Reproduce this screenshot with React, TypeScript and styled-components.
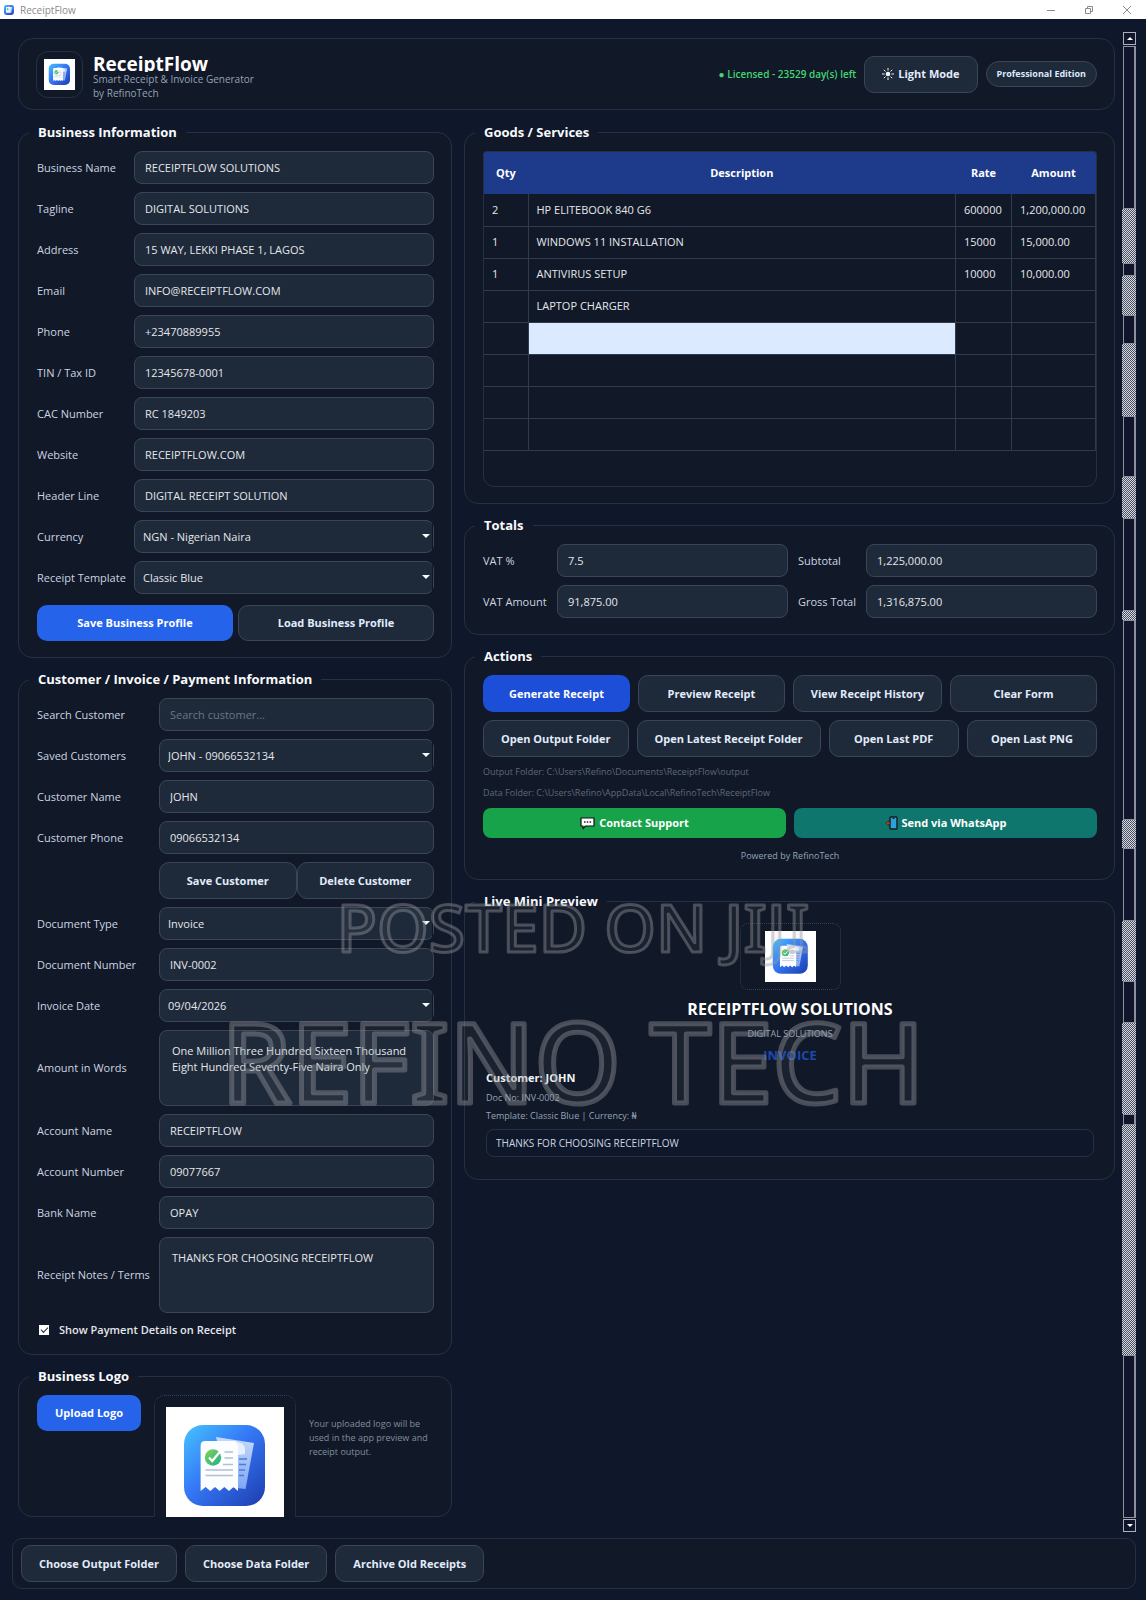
import React, { useId } from "react";
import styled, { createGlobalStyle, css } from "styled-components";

const color = {
  page: "#0f172a",
  card: "#111827",
  line: "#253142",
  field: "#1e2939",
  fieldLine: "#3a4657",
  text: "#e5e7eb",
  label: "#cbd5e1",
  muted: "#94a3b8",
  faint: "#5d697b",
  blue: "#2563eb",
};

const GlobalStyle = createGlobalStyle`
  *, *::before, *::after { box-sizing: border-box; }
  body { margin: 0; background: ${color.page}; }
  body, input, textarea, select, button {
    font-family: "Open Sans", "Noto Sans", "Liberation Sans", sans-serif;
    font-size: 11px;
    line-height: 16px;
  }
`;

/* ---------- window ---------- */

const Window = styled.div`
  position: relative;
  min-height: 100vh;
  display: flex;
  flex-direction: column;
  overflow: hidden;
  background: ${color.page};
  color: ${color.text};
`;

const TitleBar = styled.div`
  height: 19px;
  flex: none;
  display: flex;
  align-items: center;
  gap: 6px;
  padding: 0 14px 0 4px;
  background: #fff;
  color: #8b8b8b;
  font-size: 10px;
`;

const WindowButtons = styled.div`
  margin-left: auto;
  display: flex;
  gap: 28px;
`;

const WindowButton = styled.button`
  display: flex;
  padding: 0;
  border: 0;
  background: none;
  color: #8b8b8b;
`;

const Main = styled.main`
  flex: 1;
  display: grid;
  grid-template-columns: minmax(0, 1fr) 14px;
  gap: 7px;
  padding: 13px 10px 0 12px;
`;

const Content = styled.div`
  padding: 6px 0 0 6px;
`;

const Columns = styled.div`
  display: grid;
  grid-template-columns: minmax(0, 2fr) minmax(0, 3fr);
  align-items: start;
  gap: 12px;
  margin-top: 13px;
`;

const Column = styled.div`
  display: flex;
  flex-direction: column;
  gap: 12px;
`;

/* ---------- header ---------- */

const Header = styled.header`
  height: 72px;
  display: flex;
  align-items: center;
  gap: 8px;
  padding: 0 17px;
  border: 1px solid ${color.line};
  border-radius: 15px;
  background: ${color.card};
`;

const LogoTile = styled.div`
  width: 47px;
  height: 47px;
  display: grid;
  place-items: center;
  border: 1px solid ${color.line};
  border-radius: 12px;
`;

const Brand = styled.div`
  flex: 1;
  padding: 6px 0 0 2px;
  color: ${color.muted};
  font-size: 10px;
  line-height: 14px;
`;

const BrandName = styled.h1`
  height: 18px;
  margin: 0;
  overflow: hidden;
  color: #fff;
  font-size: 19px;
  font-weight: 700;
  line-height: 20px;
`;

const BrandLine = styled.div``;

const License = styled.span`
  color: #41d673;
  font-size: 10px;
  font-weight: 600;
`;

const EditionPill = styled.span`
  padding: 4px 10px;
  border: 1px solid ${color.fieldLine};
  border-radius: 13px;
  background: ${color.field};
  color: #dbeafe;
  font-size: 9px;
  font-weight: 700;
`;

/* ---------- groups and fields ---------- */

const Group = styled.fieldset<{ $flush?: boolean }>`
  min-width: 0;
  margin: 0;
  padding: 10px 17px ${(p) => (p.$flush ? 0 : 16)}px 18px;
  border: 1px solid ${color.line};
  border-radius: 14px;
  background: ${color.card};
`;

const GroupTitle = styled.legend`
  margin-left: -8px;
  padding: 0 9px;
  color: #f8fafc;
  font-size: 13px;
  font-weight: 700;
  line-height: 18px;
`;

const Stack = styled.div`
  display: flex;
  flex-direction: column;
  gap: 8px;
`;

const Row = styled.div<{ $label: number }>`
  display: grid;
  grid-template-columns: ${(p) => p.$label}px minmax(0, 1fr);
  align-items: center;
`;

const Label = styled.label`
  color: ${color.label};
`;

const box = css`
  width: 100%;
  border: 1px solid ${color.fieldLine};
  border-radius: 8px;
  background: ${color.field};
  color: ${color.text};
  outline: none;
`;

const Input = styled.input`
  ${box}
  height: 33px;
  padding: 0 10px;
  &::placeholder {
    color: #6b7687;
    opacity: 1;
  }
`;

const TextArea = styled.textarea`
  ${box}
  display: block;
  height: 76px;
  padding: 12px;
  resize: none;
`;

const SelectBox = styled.div`
  position: relative;
  &::before {
    content: "";
    position: absolute;
    top: 4px;
    right: 1px;
    bottom: 2px;
    width: 1px;
    background: ${color.page};
  }
  &::after {
    content: "";
    position: absolute;
    top: 14px;
    right: 4px;
    border: 4px solid transparent;
    border-top-color: #f8fafc;
    border-bottom: 0;
    pointer-events: none;
  }
`;

const Select = styled.select`
  ${box}
  display: block;
  height: 33px;
  padding: 0 20px 0 8px;
  appearance: none;
`;

const CheckRow = styled.label`
  height: 17px;
  display: flex;
  align-items: center;
  gap: 10px;
  padding-left: 2px;
  font-weight: 600;
`;

const CheckBox = styled.input`
  width: 10px;
  height: 10px;
  margin: 0;
  display: grid;
  place-items: center;
  appearance: none;
  background: #fff;
  &:checked::after {
    content: "";
    width: 7px;
    height: 4px;
    margin-bottom: 2px;
    border: solid #1f2937;
    border-width: 0 0 1px 1px;
    transform: rotate(-45deg);
  }
`;

/* ---------- buttons ---------- */

const tones = {
  plain: css`
    border-color: ${color.fieldLine};
    background: ${color.field};
    color: #e2ecfb;
  `,
  primary: css`
    background: ${color.blue};
  `,
  deep: css`
    background: #1d4ed8;
  `,
  green: css`
    background: #16a34a;
  `,
  teal: css`
    background: #0f766e;
  `,
};

const Button = styled.button<{ $tone?: keyof typeof tones; $height?: number }>`
  height: ${(p) => p.$height ?? 37}px;
  display: inline-flex;
  align-items: center;
  justify-content: center;
  gap: 4px;
  padding: 0 17px;
  border: 1px solid transparent;
  border-radius: ${(p) => ((p.$height ?? 37) < 35 ? 8 : 10)}px;
  color: #fff;
  font-weight: 700;
  white-space: nowrap;
  ${(p) => tones[p.$tone ?? "plain"]}
`;

const ButtonRow = styled.div<{ $gap?: number; $top?: number }>`
  display: flex;
  gap: ${(p) => p.$gap ?? 8}px;
  margin-top: ${(p) => p.$top ?? 0}px;
  & > ${Button} {
    flex: 1 1 0;
  }
`;

/* ---------- goods table ---------- */

const TableFrame = styled.div`
  height: 336px;
  overflow: hidden;
  border: 1px solid ${color.line};
  border-radius: 3px 3px 11px 11px;
`;

const Table = styled.table`
  width: 100%;
  table-layout: fixed;
  border-collapse: collapse;
`;

const Col = styled.col<{ $width?: number }>`
  width: ${(p) => (p.$width ? `${p.$width}px` : "auto")};
`;

const HeadCell = styled.th`
  height: 42px;
  padding: 0;
  background: #1e3a8a;
  color: #fff;
  font-weight: 700;
`;

const Cell = styled.td<{ $selected?: boolean }>`
  height: 32px;
  padding: 0 8px;
  border-right: 1px solid #303b4b;
  border-bottom: 1px solid #303b4b;
  background: ${(p) => (p.$selected ? "#dbeafe" : "transparent")};
`;

/* ---------- totals, actions, preview ---------- */

const TotalsGrid = styled.div`
  display: grid;
  grid-template-columns: 64px minmax(0, 1fr) 58px minmax(0, 1fr);
  align-items: center;
  gap: 8px 10px;
  white-space: nowrap;
`;

const Paths = styled.div`
  display: flex;
  flex-direction: column;
  gap: 7px;
  color: ${color.faint};
  font-size: 9px;
  line-height: 14px;
`;

const PathLine = styled.div``;

const Powered = styled.div`
  padding-top: 3px;
  color: ${color.muted};
  font-size: 9px;
  line-height: 14px;
  text-align: center;
`;

const Preview = styled.div`
  display: flex;
  flex-direction: column;
  gap: 6px;
  padding: 3px 3px 6px;
`;

const PreviewLogo = styled.div`
  width: 101px;
  height: 67px;
  display: grid;
  place-items: center;
  align-self: center;
  border: 1px dotted #334155;
  border-radius: 8px;
`;

const PreviewName = styled.h2`
  margin: 0;
  color: #fff;
  font-size: 16px;
  font-weight: 700;
  line-height: 26px;
  text-align: center;
`;

const PreviewLine = styled.div<{ $center?: boolean }>`
  color: ${color.muted};
  font-size: 9px;
  line-height: 12px;
  text-align: ${(p) => (p.$center ? "center" : "left")};
`;

const PreviewKind = styled.div`
  color: #1c48ae;
  font-size: 13px;
  font-weight: 700;
  line-height: 18px;
  text-align: center;
`;

const PreviewCustomer = styled.div`
  color: #f1f5f9;
  font-weight: 700;
`;

const PreviewNote = styled.div`
  height: 28px;
  margin-top: 1px;
  padding: 5px 9px;
  border: 1px solid ${color.line};
  border-radius: 8px;
  background: ${color.page};
  color: ${color.label};
  font-size: 10px;
`;

/* ---------- logo group ---------- */

const LogoRow = styled.div`
  height: 122px;
  display: flex;
  align-items: flex-start;
  gap: 13px;
  margin-bottom: -1px;
  overflow: hidden;
`;

const UploadedLogo = styled.div`
  flex: none;
  padding: 11px;
  border: 1px dotted #334155;
  border-radius: 10px;
  background: ${color.card};
`;

const LogoHint = styled.p`
  margin: 22px 0 0;
  color: #828e9f;
  font-size: 9px;
  line-height: 14px;
`;

/* ---------- footer and scroll bar ---------- */

const Footer = styled.footer`
  flex: none;
  display: flex;
  gap: 8px;
  margin: 6px 10px 11px 12px;
  padding: 6px 8px;
  border: 1px solid ${color.line};
  border-radius: 10px;
  background: ${color.card};
`;

const ScrollBar = styled.div`
  display: flex;
  flex-direction: column;
`;

const ScrollArrow = styled.button<{ $down?: boolean }>`
  height: 13px;
  flex: none;
  display: grid;
  place-items: center;
  margin: ${(p) => (p.$down ? "1px 0 0 1px" : "0 0 1px 1px")};
  padding: 0;
  border: 1px solid #aab0bc;
  background: #10152c;
  &::after {
    content: "";
    border: 3px solid transparent;
    ${(p) =>
      p.$down
        ? "border-top-color: #fff; border-bottom: 0;"
        : "border-bottom-color: #fff; border-top: 0;"}
  }
`;

const ScrollPart = styled.div<{ $size: number; $dots: boolean }>`
  flex: ${(p) => p.$size} 1 0;
  ${(p) =>
    p.$dots
      ? css`
          background: repeating-conic-gradient(#d5d8df 0 25%, #4b5062 0 50%) 0 0 / 2px 2px;
        `
      : css`
          margin-left: 1px;
          border: solid #8b909c;
          border-width: 1px 2px 1px 1px;
          background: #10152c;
        `}
`;

/* ---------- watermark ---------- */

const Watermark = styled.svg`
  position: absolute;
  top: 880px;
  left: 0;
  width: 100%;
  height: 250px;
  pointer-events: none;
  font-family: "Noto Sans", "Open Sans", sans-serif;
  font-weight: 500;
  text-anchor: middle;
  fill: rgba(150, 152, 158, 0.08);
  stroke: rgba(150, 152, 160, 0.42);
  stroke-linejoin: round;
`;

/* ---------- drawings ---------- */

function AppLogo({ size, bare = false }: { size: number; bare?: boolean }) {
  const id = useId();
  return (
    <svg
      width={size}
      height={size}
      viewBox={bare ? "18 18 82 82" : "0 0 118 118"}
      role="img"
      aria-label="ReceiptFlow logo"
      display="block"
    >
      <defs>
        <linearGradient id={`${id}a`} x1="0" y1="0" x2="1" y2="1">
          <stop offset="0" stopColor="#46c3ff" />
          <stop offset="0.45" stopColor="#3578f6" />
          <stop offset="1" stopColor="#1d3cae" />
        </linearGradient>
        <linearGradient id={`${id}b`} x1="0" y1="0" x2="1" y2="1">
          <stop offset="0" stopColor="#8ccf55" />
          <stop offset="1" stopColor="#19b38c" />
        </linearGradient>
        <linearGradient id={`${id}c`} x1="0" y1="0" x2="0" y2="1">
          <stop offset="0" stopColor="#c4dafc" />
          <stop offset="1" stopColor="#7ea6f2" />
        </linearGradient>
      </defs>
      {!bare && <rect width="118" height="118" fill="#fff" />}
      <rect x="18" y="18" width="81" height="81" rx="19" fill={`url(#${id}a)`} />
      <path d="M50 30 88 36 79.500 82 62 80Z" fill={`url(#${id}c)`} />
      <path d="M69 35q10 0 10 8v4l-7 1z" fill="#e7f0fe" />
      <path d="M73 52h8M73 57.500h7M73 63h6M73 68.500h5" stroke="#4d79d8" strokeWidth="1.500" />
      <path
        d="M39 34h30q3 1 3 7v43l-4.500-4-4.500 4-4.700-4-4.600 4-4.700-4-4.700 4-4.700-4-5 4V39q0-5 4.400-5z"
        fill="#fbfdff"
      />
      <circle cx="47" cy="50.500" r="8.200" fill={`url(#${id}b)`} />
      <path d="m43 50.500 3.200 3.500 7.500-9" fill="none" stroke="#fff" strokeWidth="2.200" />
      <path d="M58.500 45H67M58.500 51H67M57 57.500h10M39.500 63H67M39.500 68.500H67" stroke="#b4bfd4" strokeWidth="1.700" />
    </svg>
  );
}

function SunIcon() {
  return (
    <svg width="12" height="12" viewBox="0 0 12 12" aria-hidden="true">
      <circle cx="6" cy="6" r="2.300" fill="#f1f5f9" />
      <path
        d="M6 0v2.600M6 9.400V12M0 6h2.600M9.400 6H12M1.800 1.800l1.700 1.700M8.500 8.500l1.700 1.700M10.200 1.800 8.500 3.500M3.500 8.500l-1.700 1.700"
        stroke="#f1f5f9"
        strokeWidth="1"
      />
    </svg>
  );
}

function ChatIcon() {
  return (
    <svg width="15" height="14" viewBox="0 0 15 14" aria-hidden="true">
      <path d="M1 2h13v8H5.500L3 12.500V10H1z" fill="#fff" stroke="#111" strokeWidth="1.200" strokeLinejoin="round" />
      <path d="M4 6h1.500M6.800 6h1.500M9.600 6h1.500" stroke="#222" strokeWidth="1.500" />
    </svg>
  );
}

function PhoneIcon() {
  return (
    <svg width="13" height="14" viewBox="0 0 13 14" aria-hidden="true">
      <rect x="5" y="1" width="7" height="12" rx="0.800" fill="#2aa3dc" stroke="#1b1b1b" strokeWidth="1.400" />
      <path d="M7.500 2.600h2" stroke="#1b1b1b" />
      <path d="M0.800 7.200 3.600 4.600v1.600h2v2h-2v1.600z" fill="#a8432a" stroke="#1b1b1b" strokeWidth="0.500" />
    </svg>
  );
}

/* ---------- data ---------- */

type FieldSpec = {
  label: string;
  value?: string;
  placeholder?: string;
  kind?: "input" | "select" | "area";
};

const businessFields: FieldSpec[] = [
  { label: "Business Name", value: "RECEIPTFLOW SOLUTIONS" },
  { label: "Tagline", value: "DIGITAL SOLUTIONS" },
  { label: "Address", value: "15 WAY, LEKKI PHASE 1, LAGOS" },
  { label: "Email", value: "INFO@RECEIPTFLOW.COM" },
  { label: "Phone", value: "+23470889955" },
  { label: "TIN / Tax ID", value: "12345678-0001" },
  { label: "CAC Number", value: "RC 1849203" },
  { label: "Website", value: "RECEIPTFLOW.COM" },
  { label: "Header Line", value: "DIGITAL RECEIPT SOLUTION" },
  { label: "Currency", value: "NGN - Nigerian Naira", kind: "select" },
  { label: "Receipt Template", value: "Classic Blue", kind: "select" },
];

const customerFields: FieldSpec[] = [
  { label: "Search Customer", placeholder: "Search customer..." },
  { label: "Saved Customers", value: "JOHN - 09066532134", kind: "select" },
  { label: "Customer Name", value: "JOHN" },
  { label: "Customer Phone", value: "09066532134" },
];

const invoiceFields: FieldSpec[] = [
  { label: "Document Type", value: "Invoice", kind: "select" },
  { label: "Document Number", value: "INV-0002" },
  { label: "Invoice Date", value: "09/04/2026", kind: "select" },
  {
    label: "Amount in Words",
    value: "One Million Three Hundred Sixteen Thousand\nEight Hundred Seventy-Five Naira Only",
    kind: "area",
  },
  { label: "Account Name", value: "RECEIPTFLOW" },
  { label: "Account Number", value: "09077667" },
  { label: "Bank Name", value: "OPAY" },
  { label: "Receipt Notes / Terms", value: "THANKS FOR CHOOSING RECEIPTFLOW", kind: "area" },
];

const goods = [
  ["2", "HP ELITEBOOK 840 G6", "600000", "1,200,000.00"],
  ["1", "WINDOWS 11 INSTALLATION", "15000", "15,000.00"],
  ["1", "ANTIVIRUS SETUP", "10000", "10,000.00"],
  ["", "LAPTOP CHARGER", "", ""],
  ["", "", "", ""],
  ["", "", "", ""],
  ["", "", "", ""],
  ["", "", "", ""],
];

const totals: [string, string][] = [
  ["VAT %", "7.5"],
  ["Subtotal", "1,225,000.00"],
  ["VAT Amount", "91,875.00"],
  ["Gross Total", "1,316,875.00"],
];

/* Lengths of the scroll track, plain and dotted in turn. */
const track = [163, 55, 11, 39, 28, 73, 60, 41, 92, 9, 201, 28, 72, 61, 41, 92, 9, 233, 163];

/* ---------- parts ---------- */

function Control({ id, spec }: { id: string; spec: FieldSpec }) {
  if (spec.kind === "select") {
    return (
      <SelectBox>
        <Select id={id} defaultValue={spec.value}>
          <option>{spec.value}</option>
        </Select>
      </SelectBox>
    );
  }
  if (spec.kind === "area") {
    return <TextArea id={id} defaultValue={spec.value} />;
  }
  return <Input id={id} defaultValue={spec.value} placeholder={spec.placeholder} />;
}

function Fields({ specs, label }: { specs: FieldSpec[]; label: number }) {
  const base = useId();
  return (
    <>
      {specs.map((spec, i) => (
        <Row key={spec.label} $label={label}>
          <Label htmlFor={`${base}${i}`}>{spec.label}</Label>
          <Control id={`${base}${i}`} spec={spec} />
        </Row>
      ))}
    </>
  );
}

export default function App() {
  return (
    <>
      <GlobalStyle />
      <Window>
        <TitleBar>
          <AppLogo size={10} bare />
          ReceiptFlow
          <WindowButtons>
            <WindowButton aria-label="Minimize">
              <svg width="10" height="10" viewBox="0 0 10 10" stroke="currentColor" fill="none">
                <path d="M1 5.500h8" />
              </svg>
            </WindowButton>
            <WindowButton aria-label="Restore">
              <svg width="10" height="10" viewBox="0 0 10 10" stroke="currentColor" fill="none">
                <path d="M1.500 3.500h5v5h-5zM3.500 3.500v-2h5v5h-2" />
              </svg>
            </WindowButton>
            <WindowButton aria-label="Close">
              <svg width="10" height="10" viewBox="0 0 10 10" stroke="currentColor" fill="none">
                <path d="m1 1 8 8M9 1 1 9" />
              </svg>
            </WindowButton>
          </WindowButtons>
        </TitleBar>

        <Main>
          <Content>
            <Header>
              <LogoTile>
                <AppLogo size={31} />
              </LogoTile>
              <Brand>
                <BrandName>ReceiptFlow</BrandName>
                <BrandLine>Smart Receipt &amp; Invoice Generator</BrandLine>
                <BrandLine>by RefinoTech</BrandLine>
              </Brand>
              <License>● Licensed - 23529 day(s) left</License>
              <Button>
                <SunIcon />
                Light Mode
              </Button>
              <EditionPill>Professional Edition</EditionPill>
            </Header>

            <Columns>
              <Column>
                <Group>
                  <GroupTitle>Business Information</GroupTitle>
                  <Stack>
                    <Fields specs={businessFields} label={97} />
                    <ButtonRow $gap={5} $top={3}>
                      <Button $tone="primary" $height={36}>Save Business Profile</Button>
                      <Button $height={36}>Load Business Profile</Button>
                    </ButtonRow>
                  </Stack>
                </Group>

                <Group>
                  <GroupTitle>Customer / Invoice / Payment Information</GroupTitle>
                  <Stack>
                    <Fields specs={customerFields} label={122} />
                    <Row $label={122}>
                      <span />
                      <ButtonRow $gap={0}>
                        <Button>Save Customer</Button>
                        <Button>Delete Customer</Button>
                      </ButtonRow>
                    </Row>
                    <Fields specs={invoiceFields} label={122} />
                    <CheckRow>
                      <CheckBox type="checkbox" defaultChecked />
                      Show Payment Details on Receipt
                    </CheckRow>
                  </Stack>
                </Group>

                <Group $flush>
                  <GroupTitle>Business Logo</GroupTitle>
                  <LogoRow>
                    <Button $tone="primary" $height={36}>Upload Logo</Button>
                    <UploadedLogo>
                      <AppLogo size={118} />
                    </UploadedLogo>
                    <LogoHint>Your uploaded logo will be used in the app preview and receipt output.</LogoHint>
                  </LogoRow>
                </Group>
              </Column>

              <Column>
                <Group>
                  <GroupTitle>Goods / Services</GroupTitle>
                  <TableFrame>
                    <Table>
                      <colgroup>
                        <Col $width={44} />
                        <Col />
                        <Col $width={56} />
                        <Col $width={84} />
                      </colgroup>
                      <thead>
                        <tr>
                          <HeadCell>Qty</HeadCell>
                          <HeadCell>Description</HeadCell>
                          <HeadCell>Rate</HeadCell>
                          <HeadCell>Amount</HeadCell>
                        </tr>
                      </thead>
                      <tbody>
                        {goods.map((row, r) => (
                          <tr key={r}>
                            {row.map((value, c) => (
                              <Cell key={c} $selected={r === 4 && c === 1}>
                                {value}
                              </Cell>
                            ))}
                          </tr>
                        ))}
                      </tbody>
                    </Table>
                  </TableFrame>
                </Group>

                <Group>
                  <GroupTitle>Totals</GroupTitle>
                  <TotalsGrid>
                    {totals.map(([name, value], i) => (
                      <React.Fragment key={name}>
                        <Label htmlFor={`total-${i}`}>{name}</Label>
                        <Input id={`total-${i}`} defaultValue={value} />
                      </React.Fragment>
                    ))}
                  </TotalsGrid>
                </Group>

                <Group>
                  <GroupTitle>Actions</GroupTitle>
                  <Stack>
                    <ButtonRow>
                      <Button $tone="deep">Generate Receipt</Button>
                      <Button>Preview Receipt</Button>
                      <Button>View Receipt History</Button>
                      <Button>Clear Form</Button>
                    </ButtonRow>
                    <ButtonRow>
                      <Button>Open Output Folder</Button>
                      <Button>Open Latest Receipt Folder</Button>
                      <Button>Open Last PDF</Button>
                      <Button>Open Last PNG</Button>
                    </ButtonRow>
                    <Paths>
                      <PathLine>{"Output Folder: C:\\Users\\Refino\\Documents\\ReceiptFlow\\output"}</PathLine>
                      <PathLine>{"Data Folder: C:\\Users\\Refino\\AppData\\Local\\RefinoTech\\ReceiptFlow"}</PathLine>
                    </Paths>
                    <ButtonRow>
                      <Button $tone="green" $height={30}>
                        <ChatIcon />
                        Contact Support
                      </Button>
                      <Button $tone="teal" $height={30}>
                        <PhoneIcon />
                        Send via WhatsApp
                      </Button>
                    </ButtonRow>
                    <Powered>Powered by RefinoTech</Powered>
                  </Stack>
                </Group>

                <Group>
                  <GroupTitle>Live Mini Preview</GroupTitle>
                  <Preview>
                    <PreviewLogo>
                      <AppLogo size={51} />
                    </PreviewLogo>
                    <PreviewName>RECEIPTFLOW SOLUTIONS</PreviewName>
                    <PreviewLine $center>DIGITAL SOLUTIONS</PreviewLine>
                    <PreviewKind>INVOICE</PreviewKind>
                    <PreviewCustomer>Customer: JOHN</PreviewCustomer>
                    <PreviewLine>Doc No: INV-0002</PreviewLine>
                    <PreviewLine>Template: Classic Blue | Currency: ₦</PreviewLine>
                    <PreviewNote>THANKS FOR CHOOSING RECEIPTFLOW</PreviewNote>
                  </Preview>
                </Group>
              </Column>
            </Columns>
          </Content>

          <ScrollBar>
            <ScrollArrow aria-label="Scroll up" />
            {track.map((size, i) => (
              <ScrollPart key={i} $size={size} $dots={i % 2 === 1} />
            ))}
            <ScrollArrow $down aria-label="Scroll down" />
          </ScrollBar>
        </Main>

        <Footer>
          <Button>Choose Output Folder</Button>
          <Button>Choose Data Folder</Button>
          <Button>Archive Old Receipts</Button>
        </Footer>

        <Watermark>
          <text x="50%" y="72" fontSize="66" strokeWidth="3">POSTED ON JIJI</text>
          <text x="50%" y="223" fontSize="110" strokeWidth="5">REFINO TECH</text>
        </Watermark>
      </Window>
    </>
  );
}
